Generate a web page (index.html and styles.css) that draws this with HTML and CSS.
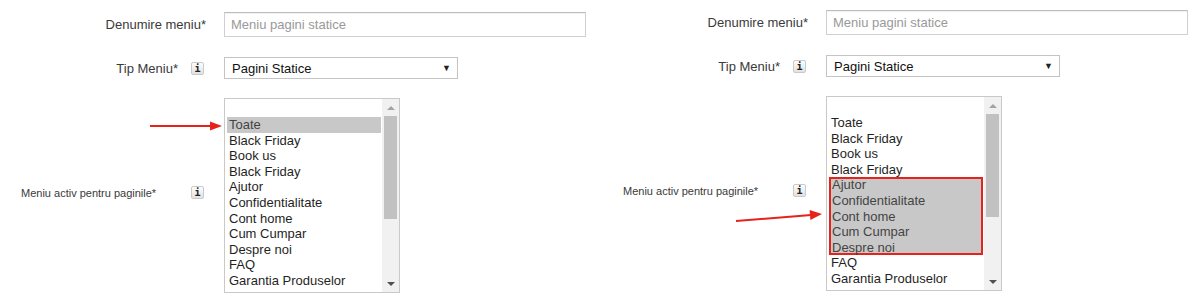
FILE: index.html
```html
<!DOCTYPE html>
<html lang="ro">
<head>
<meta charset="UTF-8">
<meta name="viewport" content="width=device-width, initial-scale=1.0">
<title>Meniu pagini statice</title>
<link rel="stylesheet" href="styles.css">
</head>
<body>
  <div class="page">
    <!-- Left: "Toate" selected -->
    <section class="panel">
      <div class="row row-name">
        <label class="label">Denumire meniu*</label>
        <input class="text-input" type="text" placeholder="Meniu pagini statice">
      </div>
      <div class="row row-type">
        <label class="label">Tip Meniu* <span class="info">i</span></label>
        <div class="select"><span>Pagini Statice</span><span class="caret">&#9660;</span></div>
      </div>
      <div class="row row-pages">
        <label class="label label-small"><span>Meniu activ pentru paginile*</span><span class="info">i</span></label>
        <div class="listbox">
          <div class="options">
            <div class="option selected">Toate</div>
            <div class="option">Black Friday</div>
            <div class="option">Book us</div>
            <div class="option">Black Friday</div>
            <div class="option">Ajutor</div>
            <div class="option">Confidentialitate</div>
            <div class="option">Cont home</div>
            <div class="option">Cum Cumpar</div>
            <div class="option">Despre noi</div>
            <div class="option">FAQ</div>
            <div class="option">Garantia Produselor</div>
          </div>
          <div class="scrollbar">
            <div class="scroll-btn"><span class="tri-up"></span></div>
            <div class="thumb"></div>
            <div class="scroll-space"></div>
            <div class="scroll-btn"><span class="tri-down"></span></div>
          </div>
        </div>
      </div>
      <svg class="arrow arrow-left" width="72" height="12" viewBox="0 0 72 12">
        <line x1="0" y1="6" x2="62" y2="6" stroke="#e5231b" stroke-width="2"/>
        <polygon points="60,1.5 72,6 60,10.5" fill="#e5231b"/>
      </svg>
    </section>

    <!-- Right: a group of pages selected -->
    <section class="panel panel-right">
      <div class="row row-name">
        <label class="label">Denumire meniu*</label>
        <input class="text-input" type="text" placeholder="Meniu pagini statice">
      </div>
      <div class="row row-type">
        <label class="label">Tip Meniu* <span class="info">i</span></label>
        <div class="select"><span>Pagini Statice</span><span class="caret">&#9660;</span></div>
      </div>
      <div class="row row-pages">
        <label class="label label-small"><span>Meniu activ pentru paginile*</span><span class="info">i</span></label>
        <div class="listbox">
          <div class="options">
            <div class="option">Toate</div>
            <div class="option">Black Friday</div>
            <div class="option">Book us</div>
            <div class="option">Black Friday</div>
            <div class="group">
              <div class="option">Ajutor</div>
              <div class="option">Confidentialitate</div>
              <div class="option">Cont home</div>
              <div class="option">Cum Cumpar</div>
              <div class="option">Despre noi</div>
            </div>
            <div class="option">FAQ</div>
            <div class="option">Garantia Produselor</div>
          </div>
          <div class="scrollbar">
            <div class="scroll-btn"><span class="tri-up"></span></div>
            <div class="thumb"></div>
            <div class="scroll-space"></div>
            <div class="scroll-btn"><span class="tri-down"></span></div>
          </div>
        </div>
      </div>
      <svg class="arrow arrow-right" width="86" height="20" viewBox="0 0 86 20">
        <line x1="0" y1="14" x2="75" y2="8" stroke="#e5231b" stroke-width="2"/>
        <polygon points="74.4,12.9 73.6,3 86,7" fill="#e5231b"/>
      </svg>
    </section>
  </div>
</body>
</html>
```

FILE: styles.css
```css
body {
  margin: 0;
  background: #fff;
  font-family: "Liberation Sans", Arial, sans-serif;
  color: #333;
}

.page {
  display: flex;
  width: 1200px;
  height: 300px;
}

.panel {
  position: relative;
  width: 602px;
  padding: 12px 0 0 21px;
  box-sizing: border-box;
}

.panel-right {
  width: 598px;
  padding-top: 10px;
}

.row {
  display: flex;
  align-items: center;
}

.row-name {
  margin-bottom: 20px;
}

.row-type {
  margin-bottom: 19px;
}

.label {
  width: 185px;
  margin-right: 18px;
  font-size: 13px;
  text-align: right;
  color: #3a3a3a;
}

.row-type .label {
  display: flex;
  justify-content: flex-end;
  align-items: center;
  gap: 13px;
  padding-right: 2px;
  box-sizing: border-box;
}

.label-small {
  display: flex;
  justify-content: space-between;
  align-items: center;
  padding: 0 2px 6px 0;
  box-sizing: border-box;
  font-size: 11px;
  text-align: left;
}

.info {
  display: inline-flex;
  justify-content: center;
  align-items: center;
  width: 13px;
  height: 13px;
  box-sizing: border-box;
  border: 1px solid #cacaca;
  border-radius: 2px;
  background: linear-gradient(#fdfdfd, #e2e2e2);
  font: bold 10px "DejaVu Sans Mono", monospace;
  color: #222;
}

.text-input {
  width: 362px;
  height: 25px;
  box-sizing: border-box;
  margin: 0;
  padding: 0 6px;
  border: 1px solid #d0d0d0;
  border-top-color: #bdbdbd;
  box-shadow: inset 0 1px 1px rgba(0, 0, 0, 0.06);
  font: 13px "Liberation Sans", Arial, sans-serif;
  color: #333;
  outline: none;
}

.text-input::placeholder {
  color: #999;
}

.select {
  display: flex;
  justify-content: space-between;
  align-items: center;
  width: 234px;
  height: 22px;
  box-sizing: border-box;
  padding: 0 6px 0 7px;
  border: 1px solid #c4c4c4;
  font-size: 13px;
  color: #111;
}

.caret {
  font-size: 9px;
  color: #222;
}

.listbox {
  display: flex;
  width: 176px;
  height: 195px;
  box-sizing: border-box;
  border: 1px solid #c9c9c9;
}

.options {
  flex: 1;
  padding-top: 18px;
  overflow: hidden;
}

.option {
  height: 15.6px;
  line-height: 15.6px;
  margin: 0 1px 0 2px;
  padding: 0 2px;
  font-size: 13px;
  white-space: nowrap;
  color: #1f1f24;
}

.option.selected {
  background: #c8c8c8;
  color: #444;
}

.group {
  margin: 0 1px 0 2px;
  background: #c8c8c8;
  box-shadow: inset 0 0 0 2px #e5231b;
}

.group .option {
  margin: 0;
  padding-left: 3px;
  color: #444;
}

.scrollbar {
  display: flex;
  flex-direction: column;
  align-items: center;
  width: 17px;
  background: #f1f1f1;
}

.scroll-btn {
  display: flex;
  justify-content: center;
  align-items: center;
  width: 17px;
  height: 17px;
}

.tri-up {
  border-left: 4px solid transparent;
  border-right: 4px solid transparent;
  border-bottom: 4px solid #a3a3a3;
}

.tri-down {
  border-left: 4px solid transparent;
  border-right: 4px solid transparent;
  border-top: 4px solid #505050;
}

.thumb {
  width: 13px;
  height: 103px;
  background: #c1c1c1;
}

.scroll-space {
  flex: 1;
}

/* annotation arrows drawn over the screenshot */
.arrow {
  position: absolute;
}

.arrow-left {
  left: 150px;
  top: 120px;
}

.arrow-right {
  left: 134px;
  top: 207px;
}
```
